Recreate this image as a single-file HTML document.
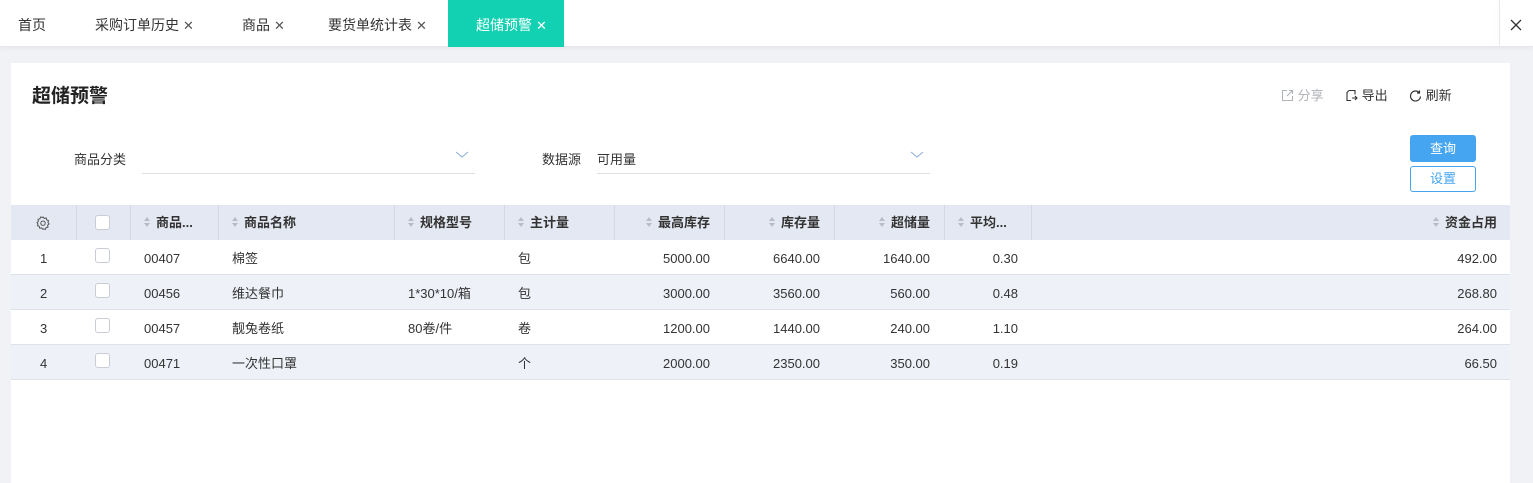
<!DOCTYPE html>
<html><head><meta charset="utf-8"><style>
*{margin:0;padding:0;box-sizing:border-box}
body{width:1533px;height:469px;background:#f0f2f5;font-family:"Liberation Sans","Noto Sans CJK SC",sans-serif;font-size:13px;color:#333;position:relative;overflow:hidden}
.a{position:absolute;white-space:nowrap}
.tabs{position:absolute;left:0;top:0;width:1533px;height:47px;background:#fff;border-bottom:1px solid #e4e7ed;box-shadow:0 2px 4px rgba(0,0,0,.04)}
.tab{position:absolute;top:0;height:47px;line-height:50px;font-size:14px;color:#333}
.x{font-size:13px;color:#555;margin-left:4px}
.card{position:absolute;left:11px;top:63px;width:1499px;height:420px;background:#fff}
.hd{position:absolute;left:11px;top:205px;width:1499px;height:35px;background:#e4e8f2}
.row{position:absolute;left:11px;width:1499px;height:35px;border-bottom:1px solid #dde1e8}
.c{position:absolute;top:1px;height:35px;line-height:35px;font-size:13px;color:#333;white-space:nowrap}
.h{font-weight:bold;color:#333}
.vl{position:absolute;top:205px;height:35px;width:1px;background:#d3d8e2}
.cb{position:absolute;width:15px;height:15px;border:1px solid #c8ccd4;border-radius:3px;background:#fff}
.s{display:inline-block;width:7px;height:11px;margin-right:5px;vertical-align:-1px;position:relative}
.s:before{content:"";position:absolute;left:0;top:0;border-left:3.5px solid transparent;border-right:3.5px solid transparent;border-bottom:4px solid #b8bcc6}
.s:after{content:"";position:absolute;left:0;top:6px;border-left:3.5px solid transparent;border-right:3.5px solid transparent;border-top:4px solid #b8bcc6}
.r{text-align:right}
</style></head><body>
<div class="tabs"></div>
<div class="tab" style="left:18px">首页</div>
<div class="tab" style="left:95px">采购订单历史<span class="x">✕</span></div>
<div class="tab" style="left:242px">商品<span class="x">✕</span></div>
<div class="tab" style="left:328px">要货单统计表<span class="x">✕</span></div>
<div class="tab" style="left:448px;width:116px;background:#12d1b2;color:#fff;padding-left:28px">超储预警<span class="x" style="color:#fff">✕</span></div>
<div class="a" style="left:1499px;top:0;width:1px;height:47px;background:#e8e8e8;box-shadow:-2px 0 4px rgba(0,0,0,.06)"></div>
<svg class="a" style="left:1510px;top:19px" width="12" height="12" viewBox="0 0 12 12"><path d="M1 1l10 10M11 1L1 11" stroke="#333" stroke-width="1.3"/></svg>

<div class="card"></div>
<div class="a" style="left:32px;top:81px;font-size:19px;font-weight:bold;color:#222">超储预警</div>
<div class="a" style="left:1281px;top:85px;color:#b0b3b8">
<svg width="13" height="13" viewBox="0 0 13 13" style="vertical-align:-2px"><path d="M6 1.5H1.5v10h10V7M8 1.5h3.5V5M11.5 1.5L6 7" fill="none" stroke="#b0b3b8" stroke-width="1.1"/></svg> 分享</div>
<div class="a" style="left:1345px;top:85px;color:#333">
<svg width="13" height="13" viewBox="0 0 13 13" style="vertical-align:-2px"><path d="M4 1.5h6v4M4 1.5L2 3.5v8h4M7 9h5M10 7l2 2-2 2" fill="none" stroke="#333" stroke-width="1.1"/></svg> 导出</div>
<div class="a" style="left:1409px;top:85px;color:#333">
<svg width="13" height="13" viewBox="0 0 13 13" style="vertical-align:-2px"><path d="M10.5 4A5 5 0 1 0 11.5 7.5M10.5 1.5V4H8" fill="none" stroke="#333" stroke-width="1.2"/></svg> 刷新</div>

<div class="a" style="left:74px;top:149px;color:#333">商品分类</div>
<div class="a" style="left:142px;top:173px;width:333px;height:1px;background:#dcdfe6"></div>
<svg class="a" style="left:455px;top:151px" width="14" height="8" viewBox="0 0 14 8"><path d="M1 1l6 5 6-5" fill="none" stroke="#8fb3d9" stroke-width="1.1"/></svg>
<div class="a" style="left:542px;top:149px;color:#333">数据源</div>
<div class="a" style="left:597px;top:149px;color:#333">可用量</div>
<div class="a" style="left:597px;top:173px;width:333px;height:1px;background:#dcdfe6"></div>
<svg class="a" style="left:910px;top:151px" width="14" height="8" viewBox="0 0 14 8"><path d="M1 1l6 5 6-5" fill="none" stroke="#8fb3d9" stroke-width="1.1"/></svg>
<div class="a" style="left:1410px;top:135px;width:66px;height:27px;background:#45a5f0;border-radius:3px;color:#fff;text-align:center;line-height:27px">查询</div>
<div class="a" style="left:1410px;top:166px;width:66px;height:26px;border:1px solid #45a5f0;border-radius:3px;color:#45a5f0;text-align:center;line-height:24px">设置</div>

<div class="hd"></div>
<div class="vl" style="left:76px"></div><div class="vl" style="left:130px"></div><div class="vl" style="left:218px"></div><div class="vl" style="left:394px"></div><div class="vl" style="left:504px"></div><div class="vl" style="left:614px"></div><div class="vl" style="left:724px"></div><div class="vl" style="left:834px"></div><div class="vl" style="left:944px"></div><div class="vl" style="left:1031px"></div>
<svg class="a" style="left:36px;top:216px" width="14" height="14" viewBox="0 0 14 14"><path d="M7 1l1.3 1.4 1.9-.4.5 1.9 1.8.7-.5 1.9L13 7.9l-1.4 1.3.4 1.9-1.9.5-.7 1.8-1.9-.5L7 13.3l-1.3-1.4-1.9.4-.5-1.9-1.8-.7.5-1.9L1 6.5l1.4-1.3-.4-1.9 1.9-.5.7-1.8 1.9.5z" fill="none" stroke="#555" stroke-width="1"/><circle cx="7" cy="7.2" r="2.2" fill="none" stroke="#555"/></svg>
<div class="cb" style="left:95px;top:215px"></div>
<div class="a c h" style="left:144px;top:205px"><i class="s"></i>商品...</div>
<div class="a c h" style="left:232px;top:205px"><i class="s"></i>商品名称</div>
<div class="a c h" style="left:408px;top:205px"><i class="s"></i>规格型号</div>
<div class="a c h" style="left:518px;top:205px"><i class="s"></i>主计量</div>
<div class="a c h" style="left:614px;top:205px;width:96px;text-align:right"><i class="s"></i>最高库存</div>
<div class="a c h" style="left:724px;top:205px;width:96px;text-align:right"><i class="s"></i>库存量</div>
<div class="a c h" style="left:834px;top:205px;width:96px;text-align:right"><i class="s"></i>超储量</div>
<div class="a c h" style="left:958px;top:205px"><i class="s"></i>平均...</div>
<div class="a c h" style="left:1031px;top:205px;width:466px;text-align:right"><i class="s"></i>资金占用</div>

<div class="row" style="top:240px;background:#fff"></div>
<div class="row" style="top:275px;background:#eef1f8"></div>
<div class="row" style="top:310px;background:#fff"></div>
<div class="row" style="top:345px;background:#eef1f8"></div>

<div class="a" style="left:0;top:240px">
<div class="c" style="left:40px">1</div><div class="cb" style="left:95px;top:8px"></div>
<div class="c" style="left:144px">00407</div><div class="c" style="left:232px">棉签</div><div class="c" style="left:518px">包</div>
<div class="c r" style="left:610px;width:100px">5000.00</div><div class="c r" style="left:720px;width:100px">6640.00</div><div class="c r" style="left:830px;width:100px">1640.00</div><div class="c r" style="left:918px;width:100px">0.30</div><div class="c r" style="left:1397px;width:100px">492.00</div>
</div>
<div class="a" style="left:0;top:275px">
<div class="c" style="left:40px">2</div><div class="cb" style="left:95px;top:8px"></div>
<div class="c" style="left:144px">00456</div><div class="c" style="left:232px">维达餐巾</div><div class="c" style="left:408px">1*30*10/箱</div><div class="c" style="left:518px">包</div>
<div class="c r" style="left:610px;width:100px">3000.00</div><div class="c r" style="left:720px;width:100px">3560.00</div><div class="c r" style="left:830px;width:100px">560.00</div><div class="c r" style="left:918px;width:100px">0.48</div><div class="c r" style="left:1397px;width:100px">268.80</div>
</div>
<div class="a" style="left:0;top:310px">
<div class="c" style="left:40px">3</div><div class="cb" style="left:95px;top:8px"></div>
<div class="c" style="left:144px">00457</div><div class="c" style="left:232px">靓兔卷纸</div><div class="c" style="left:408px">80卷/件</div><div class="c" style="left:518px">卷</div>
<div class="c r" style="left:610px;width:100px">1200.00</div><div class="c r" style="left:720px;width:100px">1440.00</div><div class="c r" style="left:830px;width:100px">240.00</div><div class="c r" style="left:918px;width:100px">1.10</div><div class="c r" style="left:1397px;width:100px">264.00</div>
</div>
<div class="a" style="left:0;top:345px">
<div class="c" style="left:40px">4</div><div class="cb" style="left:95px;top:8px"></div>
<div class="c" style="left:144px">00471</div><div class="c" style="left:232px">一次性口罩</div><div class="c" style="left:518px">个</div>
<div class="c r" style="left:610px;width:100px">2000.00</div><div class="c r" style="left:720px;width:100px">2350.00</div><div class="c r" style="left:830px;width:100px">350.00</div><div class="c r" style="left:918px;width:100px">0.19</div><div class="c r" style="left:1397px;width:100px">66.50</div>
</div>
</body></html>
